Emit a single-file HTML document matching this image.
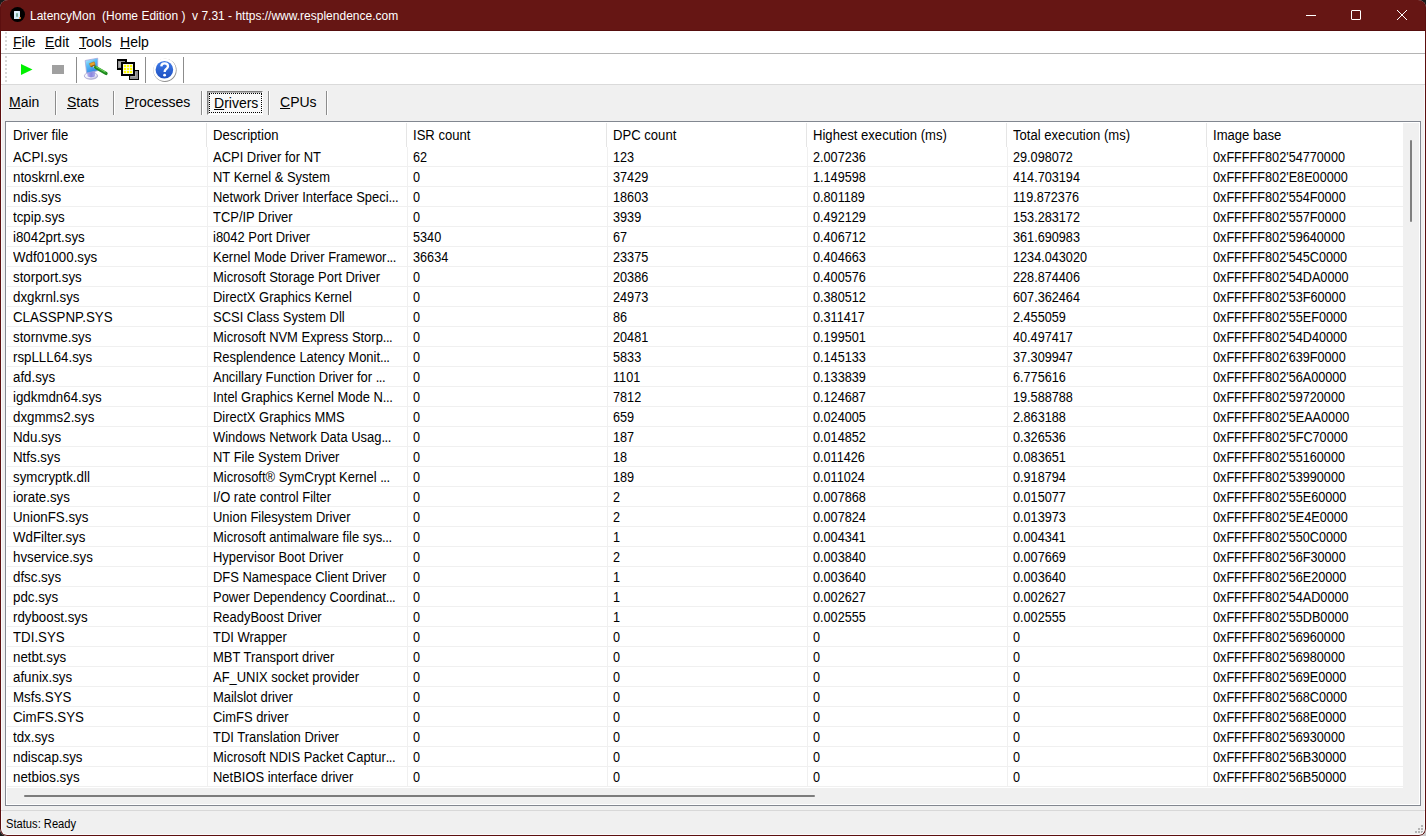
<!DOCTYPE html>
<html><head><meta charset='utf-8'><style>
*{margin:0;padding:0;box-sizing:border-box}
html,body{width:1426px;height:836px;overflow:hidden;background:#1a1a1a}
body{position:relative;font-family:"Liberation Sans",sans-serif;font-size:14px;color:#000}
.abs{position:absolute}
#win{position:absolute;left:0;top:0;width:1426px;height:836px;background:#f0f0f0;border-radius:8px 8px 7px 7px;overflow:hidden}
#inner{position:absolute;left:1px;top:85px;width:1424px;height:750px;border:1px solid #fafafa;border-top:none;border-radius:0 0 6px 6px;pointer-events:none}
#frame{position:absolute;left:0;top:0;width:1426px;height:836px;border:1px solid #5c0f0f;border-top:none;border-radius:8px 8px 7px 7px;pointer-events:none}
#title{position:absolute;left:0;top:0;width:1426px;height:31px;background:#661614;border-bottom:1px solid #560e0e}
#ttxt{position:absolute;left:30px;top:6px;font-size:12px;line-height:20px;color:#fff;white-space:pre}
#menu{position:absolute;left:0;top:31px;width:1426px;height:23px;background:#fff;border-bottom:1px solid #b4b4b4}
#tool{position:absolute;left:0;top:54px;width:1426px;height:31px;background:#fff;border-bottom:1px solid #dadada}
.mi{position:absolute;top:1px;line-height:20px}
u{text-decoration:underline;text-decoration-thickness:1px;text-underline-offset:1px}
.grip{position:absolute;left:6px;width:1px;height:1px;background:#bbb}
.tsep{position:absolute;width:1px;background:#8c8c8c}
.tab{position:absolute;top:92px;line-height:20px}
.tabsep{position:absolute;top:91px;width:2px;height:24px;border-left:1px solid #8c8c8c;background:#fff}
#lv{position:absolute;left:5px;top:121px;width:1416px;height:685px;border:1px solid #828790;background:#fff}
#hdr{position:absolute;left:1px;top:1px;width:1396px;height:24px;background:#fff}
.h{position:absolute;top:2px;width:200px;padding-left:5.6px;line-height:20px;white-space:nowrap}
.hd{position:absolute;top:0;width:1px;height:24px;background:#e5e5e5}
#rows{position:absolute;left:1px;top:25px;width:1396px;height:641px;overflow:hidden}
.r{position:absolute;left:0;width:1396px;height:20px;border-bottom:1px solid #f0f0f0}
.c{position:absolute;top:0;width:200px;height:19px;padding-left:5px;line-height:20px;white-space:nowrap;border-left:1px solid #f0f0f0}
.c0{border-left-color:transparent}
.c span,.h span{display:inline-block;transform:scaleX(.94);transform-origin:0 50%}
.c2 span,.c3 span,.c4 span,.c5 span,.c6 span{transform:scaleX(.905)}
.h span{transform:scaleX(.935)}
.c0 span{transform:scaleX(.95)}
.c1 span{transform:scaleX(.925)}
i{font-style:normal;letter-spacing:-0.5px}
#vs{position:absolute;left:1397px;top:1px;width:16px;height:665px;background:#f0f0f0}
#vthumb{position:absolute;left:7px;top:17px;width:2px;height:82px;background:#808080;border-radius:1px}
#hs{position:absolute;left:1px;top:666px;width:1412px;height:16px;background:#f0f0f0}
#hthumb{position:absolute;left:17px;top:7px;width:791px;height:2px;background:#7c7c7c;border-radius:1px}
#ssep{position:absolute;z-index:2;left:1px;top:810px;width:1424px;height:1px;background:#d8d8d8}
#stxt{position:absolute;left:6px;top:815px;font-size:12px;line-height:18px;white-space:pre;transform:scaleX(.93);transform-origin:0 50%}
.gd{position:absolute;left:5px;width:2px;height:2px;background:#d8d8d8}

</style></head><body>
<div class="abs" style="left:1412px;top:822px;width:14px;height:14px;background:#c8c8c8"></div>
<div id="win">
 <div id="title">
  <div class="abs" style="left:9.5px;top:7.4px;width:15px;height:15px;border-radius:50%;background:#000"></div>
  <div class="abs" style="left:13.5px;top:10.6px;width:6.5px;height:8px;background:linear-gradient(135deg,#e8f4ff,#c8e4f4);border-radius:0.5px"></div><div class="abs" style="left:15.5px;top:13px;width:2.5px;height:3.5px;background:#7fae9a;border-radius:1px"></div><div class="abs" style="left:19px;top:16.5px;width:2px;height:2px;background:#e08030;border-radius:1px"></div>
  <div id="ttxt">LatencyMon  (Home Edition )  v 7.31 - https://www.resplendence.com</div>
  <div class="abs" style="left:1306px;top:15px;width:10px;height:1px;background:#fff"></div>
  <div class="abs" style="left:1351px;top:10px;width:10px;height:10px;border:1px solid #fff;border-radius:1px"></div>
  <svg class="abs" style="left:1396px;top:9px" width="12" height="12" viewBox="0 0 12 12"><path d="M1 1L11 11M11 1L1 11" stroke="#fff" stroke-width="1"/></svg>
 </div>
 <div id="menu">
  <div class="mi" style="left:13px"><u>F</u>ile</div>
  <div class="mi" style="left:45px"><u>E</u>dit</div>
  <div class="mi" style="left:79px"><u>T</u>ools</div>
  <div class="mi" style="left:120px"><u>H</u>elp</div>
 </div>
 <div id="tool">
  <svg class="abs" style="left:21px;top:10px" width="12" height="12" viewBox="0 0 12 12"><path d="M0 0L11.5 5.5L0 11Z" fill="#00f000"/></svg>
  <div class="abs" style="left:52px;top:11px;width:12px;height:9px;background:#a0a0a0"></div>
  <div class="tsep" style="left:76px;top:3px;height:26px"></div>
  <svg class="abs" style="left:82px;top:1px" width="28" height="28" viewBox="0 0 28 28">
   <defs>
    <linearGradient id="scr" x1="0" y1="0" x2="0.5" y2="1"><stop offset="0" stop-color="#c4f4ff"/><stop offset="0.45" stop-color="#5cc0f6"/><stop offset="1" stop-color="#2f86e6"/></linearGradient>
    <linearGradient id="nk" x1="0" y1="0" x2="1" y2="0"><stop offset="0" stop-color="#b8b0f0"/><stop offset="0.5" stop-color="#7c78dc"/><stop offset="1" stop-color="#a8a4e8"/></linearGradient>
    <radialGradient id="base" cx="0.4" cy="0.35" r="0.7"><stop offset="0" stop-color="#ffffff"/><stop offset="0.6" stop-color="#f0f0fa"/><stop offset="1" stop-color="#a4a2d0"/></radialGradient>
   </defs>
   <ellipse cx="9" cy="20.9" rx="6.7" ry="3.4" fill="url(#base)" stroke="#a09ec8" stroke-width="0.7"/>
   <path d="M4.8 16.5L13.4 15.2L13 21.2C11.5 22.6 7.5 22.8 5.6 21.6Z" fill="url(#nk)" opacity="0.9"/>
   <path d="M3.2 5.5L15.7 3.2L15.7 15.7L4.6 18Z" fill="url(#scr)" stroke="#a6a6dc" stroke-width="0.8"/>
   <path d="M7.4 8.6L12.2 6.8L13.2 9.4L8.6 11.4Z" fill="#e8a42a" stroke="#b06c10" stroke-width="0.5"/>
   <path d="M8.4 11.2L13 9.5L13.4 10.4L9.2 12.2Z" fill="#9a5a10"/>
   <path d="M11 11.6L13.6 11L15.2 13L12.4 13.4Z" fill="#f4f8ff"/>
   <path d="M13.6 12.4L24 18.4" stroke="#1f8a1f" stroke-width="3.4" stroke-linecap="round"/>
   <path d="M14.2 11.8L23.2 17" stroke="#6cd05a" stroke-width="1.1" stroke-linecap="round"/>
  </svg>
  <svg class="abs" style="left:114px;top:2px" width="28" height="28" viewBox="0 0 28 28" shape-rendering="crispEdges">
   <rect x="3" y="3" width="10" height="11" fill="#000"/><rect x="4" y="5" width="7" height="7" fill="#8e8e8e"/><rect x="5" y="6" width="2" height="5" fill="#a8a8a8"/>
   <rect x="15" y="14" width="10" height="10" fill="#000"/><rect x="16" y="15" width="8" height="8" fill="#8e8e8e"/><rect x="17" y="16" width="5" height="5" fill="#a8a8a8"/>
   <rect x="7" y="6" width="14" height="14" fill="#000"/>
   <rect x="9" y="8" width="10" height="10" fill="#ffff00"/><g shape-rendering="geometricPrecision" fill="#f6f6ff"><rect x="9" y="8" width="0.8" height="10"/><rect x="12" y="8" width="0.8" height="10"/><rect x="15" y="8" width="0.8" height="10"/><rect x="18.2" y="8" width="0.8" height="10"/><rect x="9" y="8" width="10" height="0.8"/><rect x="9" y="11" width="10" height="0.8"/><rect x="9" y="14" width="10" height="0.8"/><rect x="9" y="17.2" width="10" height="0.8"/></g>
  </svg>
  <div class="tsep" style="left:145px;top:3px;height:26px"></div>
  <svg class="abs" style="left:150px;top:1px" width="30" height="30" viewBox="0 0 30 30">
   <defs><linearGradient id="hb" x1="0" y1="0" x2="0" y2="1"><stop offset="0" stop-color="#3d7ae8"/><stop offset="1" stop-color="#1f50c0"/></linearGradient></defs>
   <circle cx="15" cy="15.3" r="11.6" fill="#6a6a6a" opacity="0.75"/>
   <circle cx="14.6" cy="14.8" r="11.3" fill="#fff"/>
   <circle cx="14.4" cy="14.8" r="8.8" fill="url(#hb)"/>
   <path d="M11.3 11.4C11.4 9.2 12.8 8.4 14.6 8.4C16.7 8.4 18 9.6 18 11.3C18 13.2 16.2 13.8 15.3 15C14.8 15.7 14.7 16.3 14.7 17" fill="none" stroke="#fff" stroke-width="2.3"/>
   <circle cx="14.6" cy="20.2" r="1.4" fill="#fff"/>
  </svg>
  <div class="tsep" style="left:183px;top:3px;height:26px"></div>
 </div>
 <div class="tab" style="left:9px"><u>M</u>ain</div>
 <div class="tabsep" style="left:55px"></div>
 <div class="tab" style="left:67px"><u>S</u>tats</div>
 <div class="tabsep" style="left:113px"></div>
 <div class="tab" style="left:125px"><u>P</u>rocesses</div>
 <div class="tabsep" style="left:201px"></div>
 <div class="abs" style="left:207px;top:91px;width:56px;height:24px;border:1px solid;border-color:#808080 #fff #fff #808080;background:#f9f9f9;box-shadow:inset 1px 1px 0 #b4b4b4"></div>
 <div class="abs" style="left:209px;top:93px;width:53px;height:20px;border:1px dotted #000"></div>
 <div class="tab" style="left:214px;top:93px"><u>D</u>rivers</div>
 <div class="tabsep" style="left:268px"></div>
 <div class="tab" style="left:280px"><u>C</u>PUs</div>
 <div class="tabsep" style="left:326px"></div>
 <div id="lv">
  <div id="hdr"><div class="h" style="left:0px"><span>Driver file</span></div><div class="h" style="left:200px"><span>Description</span></div><div class="h" style="left:400px"><span>ISR count</span></div><div class="h" style="left:600px"><span>DPC count</span></div><div class="h" style="left:800px"><span>Highest execution (ms)</span></div><div class="h" style="left:1000px"><span>Total execution (ms)</span></div><div class="h" style="left:1200px"><span>Image base</span></div><div class="hd" style="left:199px"></div><div class="hd" style="left:399px"></div><div class="hd" style="left:599px"></div><div class="hd" style="left:799px"></div><div class="hd" style="left:999px"></div><div class="hd" style="left:1199px"></div></div>
  <div id="rows"><div class="r" style="top:0px"><div class="c c0" style="left:0px"><span>ACPI.sys</span></div><div class="c c1" style="left:200px"><span>ACPI Driver for NT</span></div><div class="c c2" style="left:400px"><span>62</span></div><div class="c c3" style="left:600px"><span>123</span></div><div class="c c4" style="left:800px"><span>2.007236</span></div><div class="c c5" style="left:1000px"><span>29.098072</span></div><div class="c c6" style="left:1200px"><span>0xFFFFF802'54770000</span></div></div>
<div class="r" style="top:20px"><div class="c c0" style="left:0px"><span>ntoskrnl.exe</span></div><div class="c c1" style="left:200px"><span>NT Kernel &amp; System</span></div><div class="c c2" style="left:400px"><span>0</span></div><div class="c c3" style="left:600px"><span>37429</span></div><div class="c c4" style="left:800px"><span>1.149598</span></div><div class="c c5" style="left:1000px"><span>414.703194</span></div><div class="c c6" style="left:1200px"><span>0xFFFFF802'E8E00000</span></div></div>
<div class="r" style="top:40px"><div class="c c0" style="left:0px"><span>ndis.sys</span></div><div class="c c1" style="left:200px"><span>Network Driver Interface Speci<i>...</i></span></div><div class="c c2" style="left:400px"><span>0</span></div><div class="c c3" style="left:600px"><span>18603</span></div><div class="c c4" style="left:800px"><span>0.801189</span></div><div class="c c5" style="left:1000px"><span>119.872376</span></div><div class="c c6" style="left:1200px"><span>0xFFFFF802'554F0000</span></div></div>
<div class="r" style="top:60px"><div class="c c0" style="left:0px"><span>tcpip.sys</span></div><div class="c c1" style="left:200px"><span>TCP/IP Driver</span></div><div class="c c2" style="left:400px"><span>0</span></div><div class="c c3" style="left:600px"><span>3939</span></div><div class="c c4" style="left:800px"><span>0.492129</span></div><div class="c c5" style="left:1000px"><span>153.283172</span></div><div class="c c6" style="left:1200px"><span>0xFFFFF802'557F0000</span></div></div>
<div class="r" style="top:80px"><div class="c c0" style="left:0px"><span>i8042prt.sys</span></div><div class="c c1" style="left:200px"><span>i8042 Port Driver</span></div><div class="c c2" style="left:400px"><span>5340</span></div><div class="c c3" style="left:600px"><span>67</span></div><div class="c c4" style="left:800px"><span>0.406712</span></div><div class="c c5" style="left:1000px"><span>361.690983</span></div><div class="c c6" style="left:1200px"><span>0xFFFFF802'59640000</span></div></div>
<div class="r" style="top:100px"><div class="c c0" style="left:0px"><span>Wdf01000.sys</span></div><div class="c c1" style="left:200px"><span>Kernel Mode Driver Framewor<i>...</i></span></div><div class="c c2" style="left:400px"><span>36634</span></div><div class="c c3" style="left:600px"><span>23375</span></div><div class="c c4" style="left:800px"><span>0.404663</span></div><div class="c c5" style="left:1000px"><span>1234.043020</span></div><div class="c c6" style="left:1200px"><span>0xFFFFF802'545C0000</span></div></div>
<div class="r" style="top:120px"><div class="c c0" style="left:0px"><span>storport.sys</span></div><div class="c c1" style="left:200px"><span>Microsoft Storage Port Driver</span></div><div class="c c2" style="left:400px"><span>0</span></div><div class="c c3" style="left:600px"><span>20386</span></div><div class="c c4" style="left:800px"><span>0.400576</span></div><div class="c c5" style="left:1000px"><span>228.874406</span></div><div class="c c6" style="left:1200px"><span>0xFFFFF802'54DA0000</span></div></div>
<div class="r" style="top:140px"><div class="c c0" style="left:0px"><span>dxgkrnl.sys</span></div><div class="c c1" style="left:200px"><span>DirectX Graphics Kernel</span></div><div class="c c2" style="left:400px"><span>0</span></div><div class="c c3" style="left:600px"><span>24973</span></div><div class="c c4" style="left:800px"><span>0.380512</span></div><div class="c c5" style="left:1000px"><span>607.362464</span></div><div class="c c6" style="left:1200px"><span>0xFFFFF802'53F60000</span></div></div>
<div class="r" style="top:160px"><div class="c c0" style="left:0px"><span>CLASSPNP.SYS</span></div><div class="c c1" style="left:200px"><span>SCSI Class System Dll</span></div><div class="c c2" style="left:400px"><span>0</span></div><div class="c c3" style="left:600px"><span>86</span></div><div class="c c4" style="left:800px"><span>0.311417</span></div><div class="c c5" style="left:1000px"><span>2.455059</span></div><div class="c c6" style="left:1200px"><span>0xFFFFF802'55EF0000</span></div></div>
<div class="r" style="top:180px"><div class="c c0" style="left:0px"><span>stornvme.sys</span></div><div class="c c1" style="left:200px"><span>Microsoft NVM Express Storp<i>...</i></span></div><div class="c c2" style="left:400px"><span>0</span></div><div class="c c3" style="left:600px"><span>20481</span></div><div class="c c4" style="left:800px"><span>0.199501</span></div><div class="c c5" style="left:1000px"><span>40.497417</span></div><div class="c c6" style="left:1200px"><span>0xFFFFF802'54D40000</span></div></div>
<div class="r" style="top:200px"><div class="c c0" style="left:0px"><span>rspLLL64.sys</span></div><div class="c c1" style="left:200px"><span>Resplendence Latency Monit<i>...</i></span></div><div class="c c2" style="left:400px"><span>0</span></div><div class="c c3" style="left:600px"><span>5833</span></div><div class="c c4" style="left:800px"><span>0.145133</span></div><div class="c c5" style="left:1000px"><span>37.309947</span></div><div class="c c6" style="left:1200px"><span>0xFFFFF802'639F0000</span></div></div>
<div class="r" style="top:220px"><div class="c c0" style="left:0px"><span>afd.sys</span></div><div class="c c1" style="left:200px"><span>Ancillary Function Driver for <i>...</i></span></div><div class="c c2" style="left:400px"><span>0</span></div><div class="c c3" style="left:600px"><span>1101</span></div><div class="c c4" style="left:800px"><span>0.133839</span></div><div class="c c5" style="left:1000px"><span>6.775616</span></div><div class="c c6" style="left:1200px"><span>0xFFFFF802'56A00000</span></div></div>
<div class="r" style="top:240px"><div class="c c0" style="left:0px"><span>igdkmdn64.sys</span></div><div class="c c1" style="left:200px"><span>Intel Graphics Kernel Mode N<i>...</i></span></div><div class="c c2" style="left:400px"><span>0</span></div><div class="c c3" style="left:600px"><span>7812</span></div><div class="c c4" style="left:800px"><span>0.124687</span></div><div class="c c5" style="left:1000px"><span>19.588788</span></div><div class="c c6" style="left:1200px"><span>0xFFFFF802'59720000</span></div></div>
<div class="r" style="top:260px"><div class="c c0" style="left:0px"><span>dxgmms2.sys</span></div><div class="c c1" style="left:200px"><span>DirectX Graphics MMS</span></div><div class="c c2" style="left:400px"><span>0</span></div><div class="c c3" style="left:600px"><span>659</span></div><div class="c c4" style="left:800px"><span>0.024005</span></div><div class="c c5" style="left:1000px"><span>2.863188</span></div><div class="c c6" style="left:1200px"><span>0xFFFFF802'5EAA0000</span></div></div>
<div class="r" style="top:280px"><div class="c c0" style="left:0px"><span>Ndu.sys</span></div><div class="c c1" style="left:200px"><span>Windows Network Data Usag<i>...</i></span></div><div class="c c2" style="left:400px"><span>0</span></div><div class="c c3" style="left:600px"><span>187</span></div><div class="c c4" style="left:800px"><span>0.014852</span></div><div class="c c5" style="left:1000px"><span>0.326536</span></div><div class="c c6" style="left:1200px"><span>0xFFFFF802'5FC70000</span></div></div>
<div class="r" style="top:300px"><div class="c c0" style="left:0px"><span>Ntfs.sys</span></div><div class="c c1" style="left:200px"><span>NT File System Driver</span></div><div class="c c2" style="left:400px"><span>0</span></div><div class="c c3" style="left:600px"><span>18</span></div><div class="c c4" style="left:800px"><span>0.011426</span></div><div class="c c5" style="left:1000px"><span>0.083651</span></div><div class="c c6" style="left:1200px"><span>0xFFFFF802'55160000</span></div></div>
<div class="r" style="top:320px"><div class="c c0" style="left:0px"><span>symcryptk.dll</span></div><div class="c c1" style="left:200px"><span>Microsoft&reg; SymCrypt Kernel <i>...</i></span></div><div class="c c2" style="left:400px"><span>0</span></div><div class="c c3" style="left:600px"><span>189</span></div><div class="c c4" style="left:800px"><span>0.011024</span></div><div class="c c5" style="left:1000px"><span>0.918794</span></div><div class="c c6" style="left:1200px"><span>0xFFFFF802'53990000</span></div></div>
<div class="r" style="top:340px"><div class="c c0" style="left:0px"><span>iorate.sys</span></div><div class="c c1" style="left:200px"><span>I/O rate control Filter</span></div><div class="c c2" style="left:400px"><span>0</span></div><div class="c c3" style="left:600px"><span>2</span></div><div class="c c4" style="left:800px"><span>0.007868</span></div><div class="c c5" style="left:1000px"><span>0.015077</span></div><div class="c c6" style="left:1200px"><span>0xFFFFF802'55E60000</span></div></div>
<div class="r" style="top:360px"><div class="c c0" style="left:0px"><span>UnionFS.sys</span></div><div class="c c1" style="left:200px"><span>Union Filesystem Driver</span></div><div class="c c2" style="left:400px"><span>0</span></div><div class="c c3" style="left:600px"><span>2</span></div><div class="c c4" style="left:800px"><span>0.007824</span></div><div class="c c5" style="left:1000px"><span>0.013973</span></div><div class="c c6" style="left:1200px"><span>0xFFFFF802'5E4E0000</span></div></div>
<div class="r" style="top:380px"><div class="c c0" style="left:0px"><span>WdFilter.sys</span></div><div class="c c1" style="left:200px"><span>Microsoft antimalware file sys<i>...</i></span></div><div class="c c2" style="left:400px"><span>0</span></div><div class="c c3" style="left:600px"><span>1</span></div><div class="c c4" style="left:800px"><span>0.004341</span></div><div class="c c5" style="left:1000px"><span>0.004341</span></div><div class="c c6" style="left:1200px"><span>0xFFFFF802'550C0000</span></div></div>
<div class="r" style="top:400px"><div class="c c0" style="left:0px"><span>hvservice.sys</span></div><div class="c c1" style="left:200px"><span>Hypervisor Boot Driver</span></div><div class="c c2" style="left:400px"><span>0</span></div><div class="c c3" style="left:600px"><span>2</span></div><div class="c c4" style="left:800px"><span>0.003840</span></div><div class="c c5" style="left:1000px"><span>0.007669</span></div><div class="c c6" style="left:1200px"><span>0xFFFFF802'56F30000</span></div></div>
<div class="r" style="top:420px"><div class="c c0" style="left:0px"><span>dfsc.sys</span></div><div class="c c1" style="left:200px"><span>DFS Namespace Client Driver</span></div><div class="c c2" style="left:400px"><span>0</span></div><div class="c c3" style="left:600px"><span>1</span></div><div class="c c4" style="left:800px"><span>0.003640</span></div><div class="c c5" style="left:1000px"><span>0.003640</span></div><div class="c c6" style="left:1200px"><span>0xFFFFF802'56E20000</span></div></div>
<div class="r" style="top:440px"><div class="c c0" style="left:0px"><span>pdc.sys</span></div><div class="c c1" style="left:200px"><span>Power Dependency Coordinat<i>...</i></span></div><div class="c c2" style="left:400px"><span>0</span></div><div class="c c3" style="left:600px"><span>1</span></div><div class="c c4" style="left:800px"><span>0.002627</span></div><div class="c c5" style="left:1000px"><span>0.002627</span></div><div class="c c6" style="left:1200px"><span>0xFFFFF802'54AD0000</span></div></div>
<div class="r" style="top:460px"><div class="c c0" style="left:0px"><span>rdyboost.sys</span></div><div class="c c1" style="left:200px"><span>ReadyBoost Driver</span></div><div class="c c2" style="left:400px"><span>0</span></div><div class="c c3" style="left:600px"><span>1</span></div><div class="c c4" style="left:800px"><span>0.002555</span></div><div class="c c5" style="left:1000px"><span>0.002555</span></div><div class="c c6" style="left:1200px"><span>0xFFFFF802'55DB0000</span></div></div>
<div class="r" style="top:480px"><div class="c c0" style="left:0px"><span>TDI.SYS</span></div><div class="c c1" style="left:200px"><span>TDI Wrapper</span></div><div class="c c2" style="left:400px"><span>0</span></div><div class="c c3" style="left:600px"><span>0</span></div><div class="c c4" style="left:800px"><span>0</span></div><div class="c c5" style="left:1000px"><span>0</span></div><div class="c c6" style="left:1200px"><span>0xFFFFF802'56960000</span></div></div>
<div class="r" style="top:500px"><div class="c c0" style="left:0px"><span>netbt.sys</span></div><div class="c c1" style="left:200px"><span>MBT Transport driver</span></div><div class="c c2" style="left:400px"><span>0</span></div><div class="c c3" style="left:600px"><span>0</span></div><div class="c c4" style="left:800px"><span>0</span></div><div class="c c5" style="left:1000px"><span>0</span></div><div class="c c6" style="left:1200px"><span>0xFFFFF802'56980000</span></div></div>
<div class="r" style="top:520px"><div class="c c0" style="left:0px"><span>afunix.sys</span></div><div class="c c1" style="left:200px"><span>AF_UNIX socket provider</span></div><div class="c c2" style="left:400px"><span>0</span></div><div class="c c3" style="left:600px"><span>0</span></div><div class="c c4" style="left:800px"><span>0</span></div><div class="c c5" style="left:1000px"><span>0</span></div><div class="c c6" style="left:1200px"><span>0xFFFFF802'569E0000</span></div></div>
<div class="r" style="top:540px"><div class="c c0" style="left:0px"><span>Msfs.SYS</span></div><div class="c c1" style="left:200px"><span>Mailslot driver</span></div><div class="c c2" style="left:400px"><span>0</span></div><div class="c c3" style="left:600px"><span>0</span></div><div class="c c4" style="left:800px"><span>0</span></div><div class="c c5" style="left:1000px"><span>0</span></div><div class="c c6" style="left:1200px"><span>0xFFFFF802'568C0000</span></div></div>
<div class="r" style="top:560px"><div class="c c0" style="left:0px"><span>CimFS.SYS</span></div><div class="c c1" style="left:200px"><span>CimFS driver</span></div><div class="c c2" style="left:400px"><span>0</span></div><div class="c c3" style="left:600px"><span>0</span></div><div class="c c4" style="left:800px"><span>0</span></div><div class="c c5" style="left:1000px"><span>0</span></div><div class="c c6" style="left:1200px"><span>0xFFFFF802'568E0000</span></div></div>
<div class="r" style="top:580px"><div class="c c0" style="left:0px"><span>tdx.sys</span></div><div class="c c1" style="left:200px"><span>TDI Translation Driver</span></div><div class="c c2" style="left:400px"><span>0</span></div><div class="c c3" style="left:600px"><span>0</span></div><div class="c c4" style="left:800px"><span>0</span></div><div class="c c5" style="left:1000px"><span>0</span></div><div class="c c6" style="left:1200px"><span>0xFFFFF802'56930000</span></div></div>
<div class="r" style="top:600px"><div class="c c0" style="left:0px"><span>ndiscap.sys</span></div><div class="c c1" style="left:200px"><span>Microsoft NDIS Packet Captur<i>...</i></span></div><div class="c c2" style="left:400px"><span>0</span></div><div class="c c3" style="left:600px"><span>0</span></div><div class="c c4" style="left:800px"><span>0</span></div><div class="c c5" style="left:1000px"><span>0</span></div><div class="c c6" style="left:1200px"><span>0xFFFFF802'56B30000</span></div></div>
<div class="r" style="top:620px"><div class="c c0" style="left:0px"><span>netbios.sys</span></div><div class="c c1" style="left:200px"><span>NetBIOS interface driver</span></div><div class="c c2" style="left:400px"><span>0</span></div><div class="c c3" style="left:600px"><span>0</span></div><div class="c c4" style="left:800px"><span>0</span></div><div class="c c5" style="left:1000px"><span>0</span></div><div class="c c6" style="left:1200px"><span>0xFFFFF802'56B50000</span></div></div></div>
  <div id="vs"><div id="vthumb"></div></div>
  <div id="hs"><div id="hthumb"></div></div>
 </div>
 <div id="ssep"></div>
 <div id="stxt">Status: Ready</div>
 <div class="gd" style="top:32px"></div><div class="gd" style="top:36px"></div><div class="gd" style="top:40px"></div><div class="gd" style="top:44px"></div><div class="gd" style="top:48px"></div><div class="gd" style="top:56px"></div><div class="gd" style="top:60px"></div><div class="gd" style="top:64px"></div><div class="gd" style="top:68px"></div><div class="gd" style="top:72px"></div><div class="gd" style="top:76px"></div><div class="gd" style="top:80px"></div>
 <div class="abs" style="left:1421px;top:825px;width:2px;height:2px;background:#b4b4b4"></div><div class="abs" style="left:1418px;top:828px;width:2px;height:2px;background:#b4b4b4"></div><div class="abs" style="left:1421px;top:828px;width:2px;height:2px;background:#b4b4b4"></div><div class="abs" style="left:1415px;top:831px;width:2px;height:2px;background:#b4b4b4"></div><div class="abs" style="left:1418px;top:831px;width:2px;height:2px;background:#b4b4b4"></div><div class="abs" style="left:1421px;top:831px;width:2px;height:2px;background:#b4b4b4"></div><div id="inner"></div><div id="frame"></div>
</div>

</body></html>
